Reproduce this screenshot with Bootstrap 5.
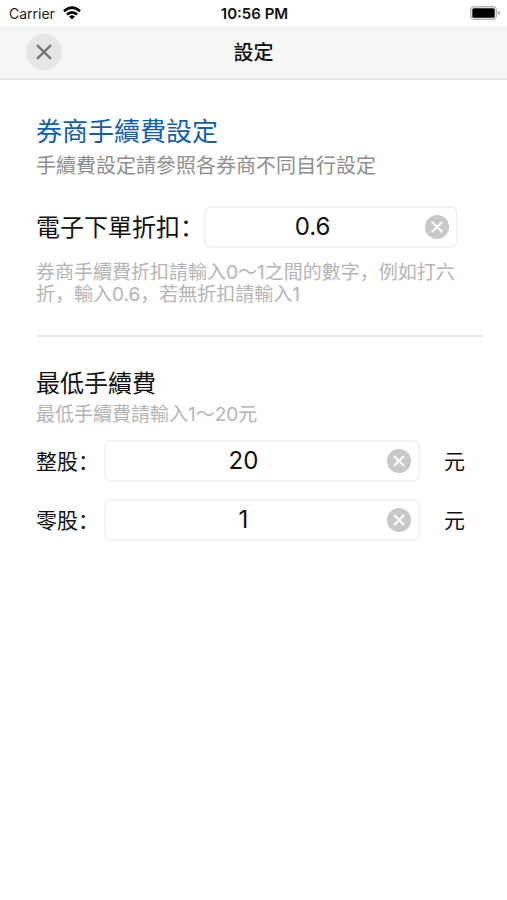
<!DOCTYPE html>
<html lang="zh-Hans">
<head>
<meta charset="utf-8">
<meta name="viewport" content="width=device-width, initial-scale=1">
<title>設定</title>
<link href="https://cdn.jsdelivr.net/npm/bootstrap@5.3.0/dist/css/bootstrap.min.css" rel="stylesheet">
<style>
body{font-family:Inter,"Noto Sans CJK SC",sans-serif;color:#111;background:#fff}
.status{height:26px;font-size:14px;line-height:26px;padding:0 7px 0 9px;color:#222}
.status span{padding-top:2px}
.status-time{font-size:15px;font-weight:600;color:#111}
.title-bar{height:54px;background:#f6f6f6;border-bottom:2px solid #e8e8e8;padding:0 26px}
.title-bar h1{font-size:20px;line-height:30px;font-weight:500;padding-top:2px}
.side{flex:1 1 0}
.close-btn{width:36px;height:36px;background:#e6e6e6;color:#757575}
.content{padding:35px 24px 0 36px}
.heading{font-size:26px;line-height:34px;font-weight:400;color:#1260ac}
.sub{font-size:20px;line-height:28px;color:#8e8e8e;margin:3px 0 26px}
.label-lg{font-size:24px;line-height:32px;font-weight:400}
.label-sm{font-size:21px;line-height:32px;padding-top:2px}
.hint{font-size:19px;line-height:22px;color:#b4b4b6}
.discount{padding-right:25px}
.discount .hint{padding-top:14px}
.field{height:42px;border:2px solid #f3f3f3;border-radius:7px;background:#fff;padding:0 7px 0 6px}
.field:focus-within{border-color:#c9dcef}
.field input{font-size:24px;line-height:30px;text-align:center;color:#111;min-width:0;outline:0}
.clear-btn{width:24px;height:24px;margin-left:12px;background:#c8c8c8;color:#fff}
.divider{height:2px;background:#e9e9e9;opacity:1;border:0;margin:29px 0 31px}
.fees{display:grid;grid-template-columns:68px 1fr 44px;row-gap:17px;align-items:center;padding-right:19px;margin-top:14px}
.fees .unit{padding-left:24px}
.label-sm,.label-lg{white-space:nowrap}
.label-lg.for-field{width:168px;padding-top:2px}
</style>
<script src="https://cdn.jsdelivr.net/npm/bootstrap@5.3.0/dist/js/bootstrap.bundle.min.js"></script>
</head>
<body>
<div class="status d-flex align-items-center">
  <div class="side d-flex align-items-center gap-2"><span>Carrier</span>
    <svg width="18" height="14" viewBox="0 0 18 14" fill="none" stroke="#000" stroke-width="2.6" aria-hidden="true"><path d="M1 5.2Q9-2 17 5.2M3.9 8.5Q9 4.1 14.1 8.5"/><path d="M9 13.5 6 10.4Q9 8 12 10.4Z" fill="#000" stroke="none"/></svg>
  </div>
  <span class="status-time">10:56 PM</span>
  <div class="side d-flex justify-content-end align-items-center">
    <svg width="30" height="14" viewBox="0 0 30 14" aria-hidden="true"><rect x=".7" y=".7" width="25.6" height="12.6" rx="3.5" fill="#fff" stroke="#b4b4b4" stroke-width="1.4"/><rect x="2.3" y="2.2" width="22.4" height="9.6" rx="1.5" fill="#000"/><path d="M27.8 4.8Q30 5.5 30 7T27.8 9.2Z" fill="#a8a8a8"/></svg>
  </div>
</div>
<header class="title-bar d-flex align-items-center">
  <div class="side">
    <button type="button" class="close-btn btn p-0 border-0 rounded-circle d-flex align-items-center justify-content-center" aria-label="關閉">
      <svg width="16" height="16" viewBox="0 0 16 16" fill="none" stroke="currentColor" stroke-width="2.4" stroke-linecap="round"><path d="M1.8 1.8l12.4 12.4M14.2 1.8 1.8 14.2"/></svg>
    </button>
  </div>
  <h1 class="m-0">設定</h1>
  <div class="side"></div>
</header>
<main class="content">
  <section>
    <h2 class="heading m-0">券商手續費設定</h2>
    <p class="sub">手續費設定請參照各券商不同自行設定</p>
    <div class="discount">
      <div class="d-flex align-items-center">
        <label class="label-lg for-field flex-shrink-0" for="discount">電子下單折扣：</label>
        <div class="field d-flex align-items-center flex-grow-1">
          <input id="discount" class="border-0 p-0 bg-transparent w-100" type="text" inputmode="decimal" value="0.6">
          <button type="button" class="clear-btn btn p-0 border-0 rounded-circle d-flex align-items-center justify-content-center flex-shrink-0" aria-label="清除電子下單折扣">
            <svg width="12" height="12" viewBox="0 0 12 12" fill="none" stroke="currentColor" stroke-width="2" stroke-linecap="round"><path d="M1.5 1.5l9 9M10.5 1.5l-9 9"/></svg>
          </button>
        </div>
      </div>
      <p class="hint m-0">券商手續費折扣請輸入0～1之間的數字，例如打六折，輸入0.6，若無折扣請輸入1</p>
    </div>
  </section>
  <hr class="divider">
  <section>
    <h2 class="label-lg m-0">最低手續費</h2>
    <p class="hint m-0 mt-1">最低手續費請輸入1～20元</p>
    <div class="fees">
      <label class="label-sm" for="board-lot">整股：</label>
      <div class="field d-flex align-items-center">
        <input id="board-lot" class="border-0 p-0 bg-transparent w-100" type="text" inputmode="numeric" value="20">
        <button type="button" class="clear-btn btn p-0 border-0 rounded-circle d-flex align-items-center justify-content-center flex-shrink-0" aria-label="清除整股">
          <svg width="12" height="12" viewBox="0 0 12 12" fill="none" stroke="currentColor" stroke-width="2" stroke-linecap="round"><path d="M1.5 1.5l9 9M10.5 1.5l-9 9"/></svg>
        </button>
      </div>
      <span class="label-sm unit">元</span>
      <label class="label-sm" for="odd-lot">零股：</label>
      <div class="field d-flex align-items-center">
        <input id="odd-lot" class="border-0 p-0 bg-transparent w-100" type="text" inputmode="numeric" value="1">
        <button type="button" class="clear-btn btn p-0 border-0 rounded-circle d-flex align-items-center justify-content-center flex-shrink-0" aria-label="清除零股">
          <svg width="12" height="12" viewBox="0 0 12 12" fill="none" stroke="currentColor" stroke-width="2" stroke-linecap="round"><path d="M1.5 1.5l9 9M10.5 1.5l-9 9"/></svg>
        </button>
      </div>
      <span class="label-sm unit">元</span>
    </div>
  </section>
</main>
</body>
</html>
